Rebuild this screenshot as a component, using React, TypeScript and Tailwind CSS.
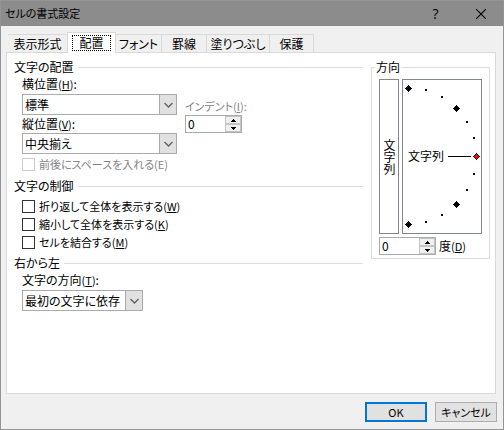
import { useState } from "react";
import type { ReactNode } from "react";

const TABS = [
  { name: "表示形式", width: "w-[59px]" },
  { name: "配置", width: "w-[49px]" },
  { name: "フォント", width: "w-[46px]" },
  { name: "罫線", width: "w-[45px]" },
  { name: "塗りつぶし", width: "w-[63px]" },
  { name: "保護", width: "w-[44px]" },
];

const MAIN_POINTS = [
  [6, 9],
  [54, 29],
  [54, 125],
  [6, 145],
];

const MINOR_POINTS = [
  [23, 10],
  [39, 17],
  [64, 42],
  [71, 58],
  [71, 94],
  [64, 110],
  [39, 135],
  [23, 142],
];

function Key({ children }: { children: string }) {
  return (
    <span className="text-[11px]">
      (<u className="underline underline-offset-1">{children}</u>)
    </span>
  );
}

function SectionTitle({ children }: { children: ReactNode }) {
  return (
    <h2 className="flex h-3.5 items-center gap-1 leading-[14px]">
      {children}
      <span className="h-px flex-1 bg-[#dcdcdc]" />
    </h2>
  );
}

function Dropdown({ id, options, width }: { id: string; options: string[]; width: string }) {
  return (
    <div className={`relative h-[21px] ${width}`}>
      <select
        id={id}
        className="h-full w-full appearance-none rounded-none border border-[#ababab] bg-white pr-5 pl-0.5 text-xs text-black outline-none"
      >
        {options.map((o) => (
          <option key={o}>{o}</option>
        ))}
      </select>
      <span className="pointer-events-none absolute inset-y-0 right-0 flex w-[18px] items-center justify-center border border-[#ababab] bg-[#e1e1e1]">
        <svg width="9" height="6" viewBox="0 0 9 6" fill="none" stroke="#606060" strokeWidth="1.3">
          <path d="M0.5 1 4.5 5l4-4" />
        </svg>
      </span>
    </div>
  );
}

function Spinner({ id }: { id: string }) {
  const [value, setValue] = useState("0");
  const step = (n: number) => setValue(String((Number(value) || 0) + n));
  return (
    <div className="flex h-[18px] w-[57px] border border-[#ababab] bg-white">
      <input
        id={id}
        value={value}
        onChange={(e) => setValue(e.target.value)}
        className="min-w-0 flex-1 pl-[2px] text-xs outline-none"
      />
      <div className="flex w-4 flex-col">
        <button
          aria-label="増やす"
          onClick={() => step(1)}
          className="flex flex-1 items-center justify-center border border-[#c4c4c4] bg-[#f0f0f0]"
        >
          <svg width="5" height="3" viewBox="0 0 5 3" shapeRendering="crispEdges">
            <path d="M2 0h1v1h1v1h1v1H0V2h1V1h1z" />
          </svg>
        </button>
        <button
          aria-label="減らす"
          onClick={() => step(-1)}
          className="flex flex-1 items-center justify-center border border-[#c4c4c4] bg-[#f0f0f0]"
        >
          <svg width="5" height="3" viewBox="0 0 5 3" shapeRendering="crispEdges">
            <path d="M0 0h5v1H4v1H3v1H2V2H1V1H0z" />
          </svg>
        </button>
      </div>
    </div>
  );
}

function Check({ children, disabled = false }: { children: ReactNode; disabled?: boolean }) {
  return (
    <label className={`flex h-[18px] items-center gap-1 text-[11px] ${disabled ? "text-[#838383]" : ""}`}>
      <input
        type="checkbox"
        disabled={disabled}
        className="size-[13px] appearance-none border border-[#333333] bg-white checked:bg-[#333333] disabled:border-[#cccccc]"
      />
      {children}
    </label>
  );
}

function Dial() {
  return (
    <div className="h-[155px] w-20 border border-[#828790] bg-white">
      <svg width="78" height="153" viewBox="1 1 78 153" role="img" aria-label="文字列の角度">
        <g shapeRendering="crispEdges">
          {MAIN_POINTS.map(([x, y]) => (
            <path
              key={`${x}-${y}`}
              transform={`translate(${x} ${y})`}
              d="M0-3h1v1h1v1h1v1h1v1H3v1H2v1H1v1H0V3h-1V2h-1V1h-1V0h1v-1h1v-1h1z"
            />
          ))}
          {MINOR_POINTS.map(([x, y]) => (
            <rect key={`${x}-${y}`} x={x} y={y} width="2" height="2" />
          ))}
          <rect x="46" y="77" width="23" height="1" />
          <path
            transform="translate(74 77)"
            d="M0-3h1v1h1v1h1v1h1v1H3v1H2v1H1v1H0V3h-1V2h-1V1h-1V0h1v-1h1v-1h1z"
          />
          <path transform="translate(74 77)" d="M0-2h1v1h1v1h1v1H2v1H1v1H0V2h-1V1h-1V0h1v-1h1z" fill="#f00" />
        </g>
        <text x="6" y="82" fontSize="12">
          文字列
        </text>
      </svg>
    </div>
  );
}

export default function App() {
  const [tab, setTab] = useState("配置");
  return (
    <div className="flex min-h-screen flex-col border border-[#949494] bg-[#f0f0f0] font-['Noto_Sans_CJK_JP',sans-serif] text-xs whitespace-nowrap text-black [font-feature-settings:'palt']">
      <header className="flex h-[25px] items-center justify-between bg-[#8c8c8c] pl-1">
        <h1 className="text-[11px]">セルの書式設定</h1>
        <div className="flex h-full">
          <button aria-label="ヘルプ" className="w-[45px] font-['Open_Sans',sans-serif] text-sm">
            ?
          </button>
          <button aria-label="閉じる" className="flex w-[45px] items-center justify-center">
            <svg width="10" height="10" viewBox="0 0 10 10" stroke="#000" strokeWidth="1.1">
              <path d="M0 0 10 10M10 0 0 10" />
            </svg>
          </button>
        </div>
      </header>

      <main className="flex flex-1 flex-col pt-1.5 pr-[7px] pl-[5px]">
        <div role="tablist" className="relative z-10 -mb-px flex items-end pl-0.5">
          {TABS.map(({ name, width }, i) => {
            const active = name === tab;
            return (
              <button
                key={name}
                role="tab"
                aria-selected={active}
                onClick={() => setTab(name)}
                className={`flex items-center justify-center ${width} ${
                  active
                    ? "h-[21px] border border-b-0 border-[#d9d9d9] bg-white"
                    : "h-[19px] border-t border-b border-[#d9d9d9]"
                } ${!active && i > 0 ? "border-r" : ""}`}
              >
                {active ? (
                  <span className="border border-dotted border-black px-[6px] leading-[14px]">{name}</span>
                ) : (
                  name
                )}
              </button>
            );
          })}
        </div>

        <section className="flex flex-1 items-start gap-2 border border-[#d9d9d9] bg-white pt-[7px] pr-[5px] pb-4 pl-[7px]">
          <div className="min-w-0 flex-1">
            <SectionTitle>文字の配置</SectionTitle>
            <div className="flex gap-2 pl-2">
              <div className="flex flex-col">
                <label htmlFor="horizontal" className="leading-5">
                  横位置<Key>H</Key>:
                </label>
                <Dropdown id="horizontal" width="w-[155px]" options={["標準", "左詰め", "右詰め"]} />
                <label htmlFor="vertical" className="leading-[18px]">
                  縦位置<Key>V</Key>:
                </label>
                <Dropdown id="vertical" width="w-[155px]" options={["中央揃え", "上詰め", "下詰め"]} />
              </div>
              <div className="flex flex-col pt-[23px]">
                <label htmlFor="indent" className="text-[11px] leading-[18px] text-[#838383]">
                  インデント<Key>I</Key>:
                </label>
                <Spinner id="indent" />
              </div>
            </div>
            <div className="mb-1.5 pt-px pl-2">
              <Check disabled>前後にスペースを入れる(E)</Check>
            </div>

            <SectionTitle>文字の制御</SectionTitle>
            <div className="mt-1 mb-[5px] pl-2">
              <Check>
                <span>
                  折り返して全体を表示する<Key>W</Key>
                </span>
              </Check>
              <Check>
                <span>
                  縮小して全体を表示する<Key>K</Key>
                </span>
              </Check>
              <Check>
                <span>
                  セルを結合する<Key>M</Key>
                </span>
              </Check>
            </div>

            <SectionTitle>右から左</SectionTitle>
            <div className="flex flex-col pl-2">
              <label htmlFor="direction" className="leading-5">
                文字の方向<Key>T</Key>:
              </label>
              <Dropdown id="direction" width="w-[121px]" options={["最初の文字に依存", "左から右", "右から左"]} />
            </div>
          </div>

          <fieldset className="border border-[#dcdcdc] px-[7px] pb-[3px]">
            <legend className="-ml-1 px-px leading-[14px]">方向</legend>
            <div className="flex gap-[3px] pt-[5px]">
              <button className="flex w-5 items-center justify-center border border-[#828790] bg-white">
                <span className="leading-[18px] [writing-mode:vertical-rl]">文字列</span>
              </button>
              <Dial />
            </div>
            <div className="mt-[3px] flex items-center gap-[3px]">
              <Spinner id="degrees" />
              <label htmlFor="degrees" className="leading-[18px]">
                度<Key>D</Key>
              </label>
            </div>
          </fieldset>
        </section>
      </main>

      <footer className="flex justify-end gap-2 pt-2 pr-1.5 pb-[7px]">
        <button className="h-5 w-[62px] border-2 border-[#0078d7] bg-[#e1e1e1] text-[11px] leading-4">OK</button>
        <button className="h-5 w-[62px] border border-[#adadad] bg-[#e1e1e1] text-[11px] leading-4">
          キャンセル
        </button>
      </footer>
    </div>
  );
}
